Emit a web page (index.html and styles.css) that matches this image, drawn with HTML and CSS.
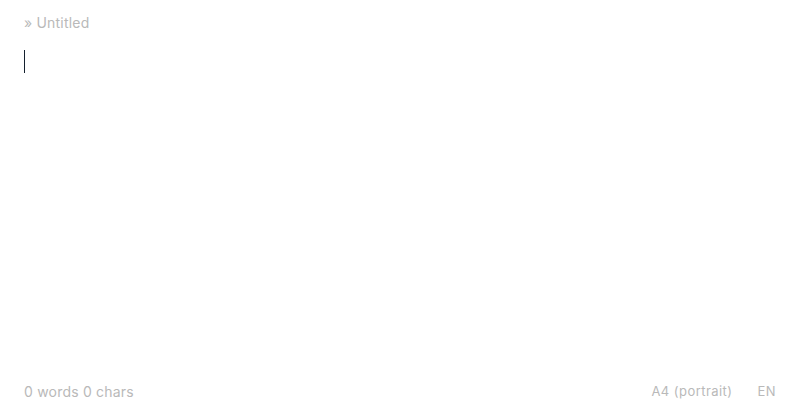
FILE: index.html
```html
<!DOCTYPE html>
<html lang="en">
<head>
<meta charset="utf-8">
<title>Untitled</title>
<link rel="stylesheet" href="styles.css">
</head>
<body>
<div class="app">
  <header class="header"><span class="crumb">» Untitled</span></header>
  <main class="editor"><span class="caret"></span></main>
  <footer class="status">
    <span class="counts">0 words 0 chars</span>
    <div class="meta">
      <span class="page">A4 (portrait)</span>
      <span class="lang">EN</span>
    </div>
  </footer>
</div>
</body>
</html>
```
FILE: styles.css
```css
html, body {
  margin: 0;
  padding: 0;
  background: #ffffff;
}
.app {
  height: 100vh;
  box-sizing: border-box;
  padding: 0 24px;
  display: flex;
  flex-direction: column;
  font-family: "Inter", "Noto Sans", sans-serif;
}
.header {
  padding-top: 13px;
  height: 20px;
  font-size: 14px;
  line-height: 20px;
  letter-spacing: 0.2px;
  color: #b9b9b9;
}
.editor {
  flex: 1;
  padding-top: 17px;
}
.caret {
  display: block;
  width: 1px;
  height: 23px;
  background: #14202e;
}
.status {
  display: flex;
  justify-content: space-between;
  align-items: center;
  height: 20px;
  margin-bottom: 14px;
  font-size: 14px;
  letter-spacing: 0.2px;
  color: #b9b9b9;
}
.meta {
  display: flex;
  gap: 25px;
  font-size: 13px;
  letter-spacing: 0.45px;
}
```
